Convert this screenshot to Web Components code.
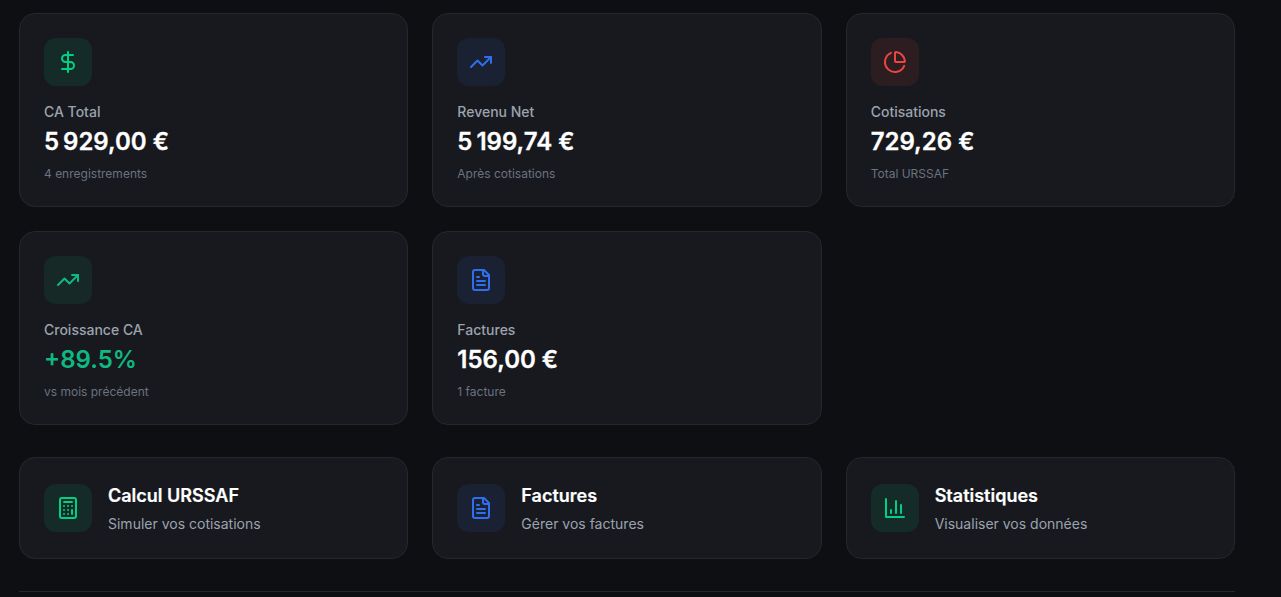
<!DOCTYPE html>
<html lang="fr"><head><meta charset="utf-8"><title>Tableau de bord</title>
<style>
html,body{margin:0;height:597px;overflow:hidden;background:#0e0f13;font-family:Inter,"Liberation Sans",sans-serif}
</style></head><body>
<dash-board>
<stat-grid>
<stat-card icon="dollar" tone="green"><span slot="label">CA Total</span><span slot="value">5&#8239;929,00 €</span><span slot="sub">4 enregistrements</span></stat-card>
<stat-card icon="trend" tone="blue"><span slot="label">Revenu Net</span><span slot="value">5&#8239;199,74 €</span><span slot="sub">Après cotisations</span></stat-card>
<stat-card icon="pie" tone="red"><span slot="label">Cotisations</span><span slot="value">729,26 €</span><span slot="sub">Total URSSAF</span></stat-card>
<stat-card icon="trend" tone="teal" accent><span slot="label">Croissance CA</span><span slot="value">+89.5%</span><span slot="sub">vs mois précédent</span></stat-card>
<stat-card icon="file" tone="blue"><span slot="label">Factures</span><span slot="value">156,00 €</span><span slot="sub">1 facture</span></stat-card>
</stat-grid>
<action-grid>
<action-card icon="calc" tone="green"><span slot="title">Calcul URSSAF</span><span slot="desc">Simuler vos cotisations</span></action-card>
<action-card icon="file" tone="blue"><span slot="title">Factures</span><span slot="desc">Gérer vos factures</span></action-card>
<action-card icon="chart" tone="green"><span slot="title">Statistiques</span><span slot="desc">Visualiser vos données</span></action-card>
</action-grid>
</dash-board>
<script>
const ICONS={
dollar:'<line x1="12" y1="2" x2="12" y2="22"/><path d="M17 5H9.5a3.5 3.5 0 0 0 0 7h5a3.5 3.5 0 0 1 0 7H6"/>',
trend:'<polyline points="22 7 13.5 15.5 8.5 10.5 2 17"/><polyline points="16 7 22 7 22 13"/>',
pie:'<path d="M21 12c.552 0 1.005-.449.95-.998a10 10 0 0 0-8.953-8.951c-.55-.055-.998.398-.998.95v8a1 1 0 0 0 1 1z"/><path d="M21.21 15.89A10 10 0 1 1 8 2.83"/>',
file:'<path d="M15 2H6a2 2 0 0 0-2 2v16a2 2 0 0 0 2 2h12a2 2 0 0 0 2-2V7Z"/><path d="M14 2v4a2 2 0 0 0 2 2h4"/><path d="M10 9H8"/><path d="M16 13H8"/><path d="M16 17H8"/>',
calc:'<rect width="16" height="20" x="4" y="2" rx="2"/><line x1="8" x2="16" y1="6" y2="6"/><line x1="16" x2="16" y1="14" y2="18"/><path d="M16 10h.01M12 10h.01M8 10h.01M12 14h.01M8 14h.01M12 18h.01M8 18h.01"/>',
chart:'<path d="M3 3v18h18"/><path d="M18 17V9"/><path d="M13 17V5"/><path d="M8 17v-3"/>'
};
const TONES={green:['#00d084','rgba(0,208,132,.1)'],blue:['#2f6fed','rgba(47,111,237,.1)'],red:['#ef4444','rgba(239,68,68,.1)'],teal:['#10b981','rgba(16,185,129,.1)']};
function iconHtml(name,tone){const[c,b]=TONES[tone];return `<div class="ic" style="color:${c};background:${b}"><svg width="24" height="24" viewBox="0 0 24 24" fill="none" stroke="currentColor" stroke-width="2" stroke-linecap="round" stroke-linejoin="round">${ICONS[name]}</svg></div>`}
const IC='.ic{width:48px;height:48px;border-radius:12px;display:flex;align-items:center;justify-content:center;flex:none}';
const CARD=':host{display:block;box-sizing:border-box;background:#17191e;border:1px solid #25272d;border-radius:16px;padding:24px}';
class Base extends HTMLElement{constructor(){super();this.attachShadow({mode:'open'})}}
customElements.define('dash-board',class extends Base{connectedCallback(){this.shadowRoot.innerHTML=`<style>:host{display:flex;flex-direction:column;box-sizing:border-box;width:1216px;margin-left:19px;padding-top:13px;gap:32px}.rule{border-top:1px solid #25272d;height:5px}</style><slot></slot><div class="rule"></div>`}});
customElements.define('stat-grid',class extends Base{connectedCallback(){this.shadowRoot.innerHTML=`<style>:host{display:grid;grid-template-columns:repeat(3,1fr);gap:24px}</style><slot></slot>`}});
customElements.define('action-grid',class extends Base{connectedCallback(){this.shadowRoot.innerHTML=`<style>:host{display:grid;grid-template-columns:repeat(3,1fr);gap:24px}</style><slot></slot>`}});
customElements.define('stat-card',class extends Base{connectedCallback(){
const a=this.hasAttribute('accent');
this.shadowRoot.innerHTML=`<style>${CARD}${IC}
.l{margin-top:16px;font-size:14px;line-height:20px;font-weight:500;color:#9ca3af}
.v{margin-top:4px;font-size:24px;line-height:32px;font-weight:600;-webkit-text-stroke:${a?0:.3}px currentColor;color:${a?'#10b981':'#fff'}}
.s{margin-top:8px;font-size:12px;line-height:16px;color:#6b7280}</style>
${iconHtml(this.getAttribute('icon'),this.getAttribute('tone'))}
<div class="l"><slot name="label"></slot></div><div class="v"><slot name="value"></slot></div><div class="s"><slot name="sub"></slot></div>`}});
customElements.define('action-card',class extends Base{connectedCallback(){
this.shadowRoot.innerHTML=`<style>${CARD}:host{display:flex;align-items:center;gap:16px;padding:24px}${IC}
.t{font-size:18px;line-height:28px;font-weight:600;-webkit-text-stroke:.2px currentColor;color:#fff}
.d{font-size:14px;line-height:20px;color:#9ca3af;margin-top:4px}</style>
${iconHtml(this.getAttribute('icon'),this.getAttribute('tone'))}
<div><div class="t"><slot name="title"></slot></div><div class="d"><slot name="desc"></slot></div></div>`}});
</script>
</body></html>
